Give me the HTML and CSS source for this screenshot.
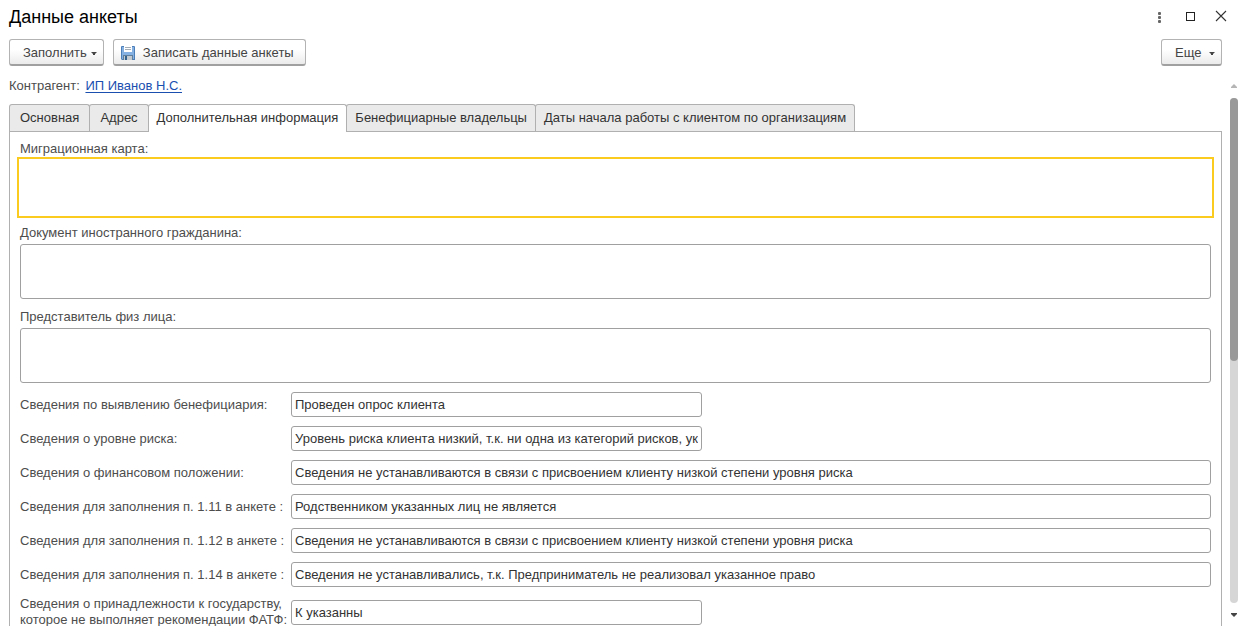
FILE: index.html
```html
<!DOCTYPE html>
<html lang="ru">
<head>
<meta charset="utf-8">
<title>Данные анкеты</title>
<link rel="stylesheet" href="styles.css">
</head>
<body>
<main class="window">
  <header class="titlebar">
    <h1 class="title">Данные анкеты</h1>
    <div class="window-controls">
      <button class="icon-button" type="button" aria-label="Меню">
        <svg width="16" height="16" viewBox="0 0 16 16" fill="#666"><rect x="7" y="3" width="3" height="3" rx="1"/><rect x="7" y="7" width="3" height="3" rx="1"/><rect x="7" y="11" width="3" height="3" rx="1"/></svg>
      </button>
      <button class="icon-button" type="button" aria-label="Развернуть">
        <svg width="16" height="16" viewBox="0 0 16 16" fill="none" stroke="#222"><rect x="4.5" y="3.5" width="8" height="8"/></svg>
      </button>
      <button class="icon-button" type="button" aria-label="Закрыть">
        <svg width="16" height="16" viewBox="0 0 16 16" fill="none" stroke="#333" stroke-width="1.1"><path d="M3 2l10 10M13 2L3 12"/></svg>
      </button>
    </div>
  </header>

  <div class="toolbar">
    <button class="button button-menu" type="button">Заполнить
      <svg width="6" height="4" viewBox="0 0 6 4" fill="#444"><path d="M0 1h6L4 3v1H2V3z"/></svg>
    </button>
    <button class="button button-save" type="button">
      <svg width="14" height="14" viewBox="0 0 14 14"><path d="M0 1q0-1 1-1h12q1 0 1 1v13H1L0 13z" fill="#4c7fb8"/><path d="M1 1h12v12H1z" fill="#85b0e2"/><path d="M3 0h8v6H3z" fill="#fff"/><path d="M4 1h6v1H4zM4 3h6v1H4z" fill="#a3adb5"/><path d="M2 9h10v5H2z" fill="#5f7f9c"/><path d="M3 10h8v4H3z" fill="#c3cbd1"/><path d="M4 10h2v4H4z" fill="#34628f"/></svg>
      Записать данные анкеты
    </button>
    <button class="button button-menu button-more" type="button">Еще
      <svg width="6" height="4" viewBox="0 0 6 4" fill="#444"><path d="M0 1h6L4 3v1H2V3z"/></svg>
    </button>
  </div>

  <div class="scroll-area">
    <div class="content">
      <p class="contractor">Контрагент: <a class="link" href="#">ИП Иванов Н.С.</a></p>

      <div class="tabs" role="tablist">
        <button class="tab" type="button" role="tab">Основная</button>
        <button class="tab" type="button" role="tab">Адрес</button>
        <button class="tab tab-long tab-active" type="button" role="tab" aria-selected="true">Дополнительная информация</button>
        <button class="tab tab-long" type="button" role="tab">Бенефициарные владельцы</button>
        <button class="tab tab-long" type="button" role="tab">Даты начала работы с клиентом по организациям</button>
      </div>

      <form class="panel">
        <div class="stacked">
          <label for="card">Миграционная карта:</label>
          <textarea class="area area-current" id="card"></textarea>
        </div>
        <div class="stacked">
          <label for="document">Документ иностранного гражданина:</label>
          <textarea class="area" id="document"></textarea>
        </div>
        <div class="stacked">
          <label for="agent">Представитель физ лица:</label>
          <textarea class="area" id="agent"></textarea>
        </div>
        <div class="row">
          <label for="beneficiary">Сведения по выявлению бенефициария:</label>
          <input class="field field-short" id="beneficiary" type="text" value="Проведен опрос клиента">
        </div>
        <div class="row">
          <label for="risk">Сведения о уровне риска:</label>
          <input class="field field-short" id="risk" type="text" value="Уровень риска клиента низкий, т.к. ни одна из категорий рисков, указанных">
        </div>
        <div class="row">
          <label for="finance">Сведения о финансовом положении:</label>
          <input class="field" id="finance" type="text" value="Сведения не устанавливаются в связи с присвоением клиенту низкой степени уровня риска">
        </div>
        <div class="row">
          <label for="p11">Сведения для заполнения п. 1.11 в анкете :</label>
          <input class="field" id="p11" type="text" value="Родственником указанных лиц не является">
        </div>
        <div class="row">
          <label for="p12">Сведения для заполнения п. 1.12 в анкете :</label>
          <input class="field" id="p12" type="text" value="Сведения не устанавливаются в связи с присвоением клиенту низкой степени уровня риска">
        </div>
        <div class="row">
          <label for="p14">Сведения для заполнения п. 1.14 в анкете :</label>
          <input class="field" id="p14" type="text" value="Сведения не устанавливались, т.к. Предприниматель не реализовал указанное право">
        </div>
        <div class="row">
          <label for="fatf">Сведения о принадлежности к государству,<br>которое не выполняет рекомендации ФАТФ:</label>
          <input class="field field-short" id="fatf" type="text" value="К указанны">
        </div>
      </form>
    </div>

    <div class="scrollbar" aria-hidden="true">
      <svg width="6" height="4" viewBox="0 0 6 4" fill="#b5b5b5"><path d="M0 4V3l3-3 3 3v1z"/></svg>
      <div class="track"><div class="thumb"></div></div>
      <svg width="6" height="4" viewBox="0 0 6 4" fill="#444"><path d="M0 0h6v1L3 4 0 1z"/></svg>
    </div>
  </div>
</main>
</body>
</html>
```
FILE: styles.css
```css
* {
  box-sizing: border-box;
}

body {
  margin: 0;
  background: #fff;
  color: #4d4d4d;
  font: 13px/16px "Liberation Sans", Arial, sans-serif;
}

button,
input,
textarea {
  font: inherit;
}

.window {
  display: flex;
  flex-direction: column;
  height: 100vh;
  padding-bottom: 10px;
}

.titlebar {
  display: flex;
  align-items: center;
  justify-content: space-between;
  height: 33px;
  padding: 0 9px;
}

.title {
  margin: 0;
  color: #000;
  font-size: 18px;
  font-weight: normal;
  line-height: 24px;
}

.window-controls {
  display: flex;
  gap: 15px;
}

.icon-button {
  display: flex;
  padding: 0;
  border: 0;
  background: none;
}

.toolbar {
  display: flex;
  gap: 9px;
  padding: 6px 16px 8px 9px;
}

.button {
  display: flex;
  align-items: center;
  height: 27px;
  border: 1px solid #b3b3b3;
  border-bottom: 2px solid #a0a0a0;
  border-radius: 3px;
  background: linear-gradient(#fff 40%, #ebebeb);
  color: #444;
  white-space: nowrap;
}

.button-menu {
  gap: 4px;
  padding: 2px 6px 0 13px;
}

.button-save {
  gap: 8px;
  padding: 2px 11px 0 7px;
}

.button-more {
  justify-content: space-between;
  min-width: 61px;
  margin-left: auto;
}

.scroll-area {
  display: flex;
  flex: 1;
  gap: 8px;
  min-height: 0;
}

.content {
  flex: 1;
  min-width: 0;
  padding: 4px 0 0 9px;
  overflow: hidden;
}

.contractor {
  margin: 0 0 10px;
}

.link {
  margin-left: 2px;
  color: #1a4fb0;
  text-underline-offset: 2px;
}

.tabs {
  display: flex;
}

.tab {
  height: 27px;
  margin-right: -1px;
  padding: 0 10px;
  border: 1px solid #b0b0b0;
  border-bottom: 0;
  border-radius: 3px 3px 0 0;
  background: #eaeaea;
  color: #333;
  white-space: nowrap;
}

.tab-long {
  padding: 0 8px;
}

.tab-active {
  height: 28px;
  margin-bottom: -1px;
  padding-bottom: 1px;
  background: #fff;
}

.panel {
  display: flex;
  flex-direction: column;
  gap: 9px;
  padding: 8px 10px;
  border: 1px solid #b0b0b0;
}

.stacked {
  display: flex;
  flex-direction: column;
  gap: 2px;
  line-height: 18px;
}

.area {
  width: 100%;
  height: 55px;
  padding: 3px;
  border: 1px solid #a0a0a0;
  border-radius: 3px;
  resize: none;
}

.area-current {
  border-color: #fff;
  border-radius: 0;
  outline: 2px solid #fbcb1f;
  outline-offset: 1px;
}

.row {
  display: grid;
  grid-template-columns: 271px 1fr;
  align-items: center;
}

.row label {
  white-space: nowrap;
}

.field {
  width: 100%;
  height: 25px;
  padding: 0 3px;
  border: 1px solid #a0a0a0;
  border-radius: 3px;
  color: #333;
}

.field-short {
  max-width: 411px;
}

.scrollbar {
  display: flex;
  flex-direction: column;
  align-items: center;
  gap: 10px;
  width: 8px;
  padding: 10px 0 9px;
}

.track {
  flex: 1;
  width: 100%;
  border-radius: 4px;
  background: #d6d6d6;
}

.thumb {
  height: 52%;
  border-radius: 4px;
  background: #999;
}
```
